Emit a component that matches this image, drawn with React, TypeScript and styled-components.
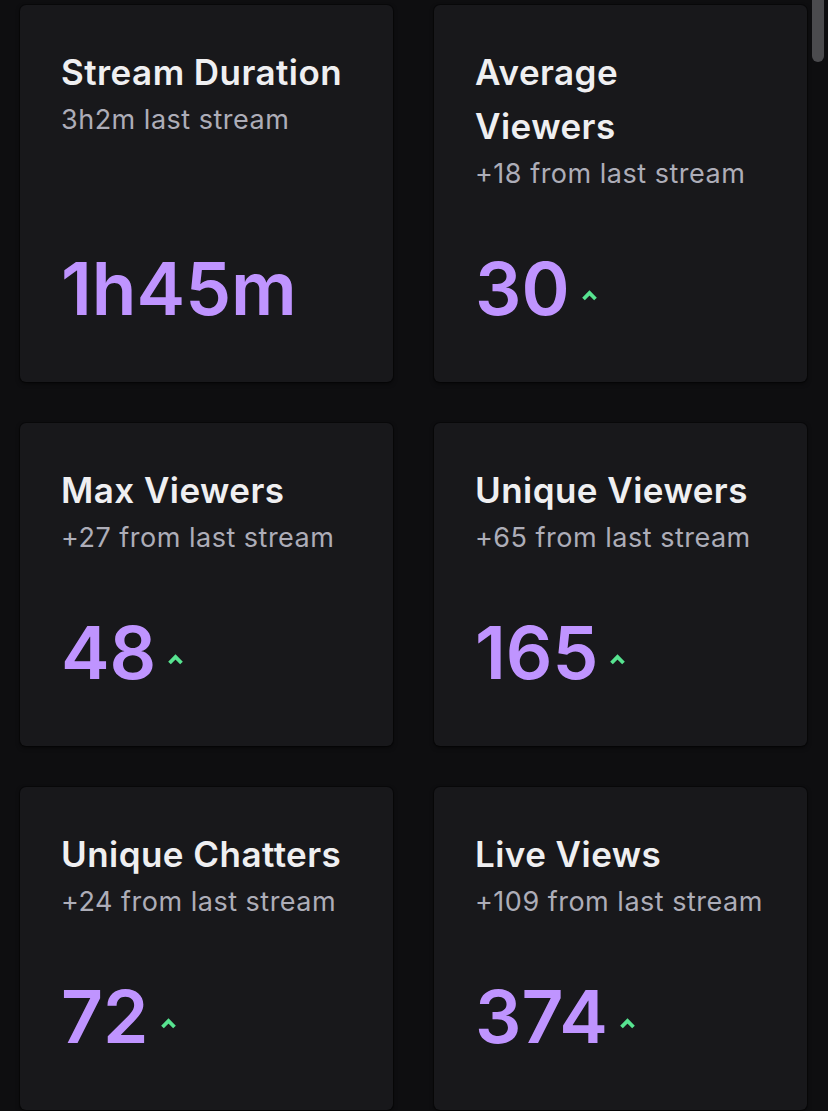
import * as React from 'react'
import styled, { createGlobalStyle } from 'styled-components'

const GlobalStyle = createGlobalStyle`
  html, body {
    margin: 0;
    padding: 0;
    background: #0e0e10;
    overflow: hidden;
  }
  body {
    font-family: Inter, "Noto Sans", "Liberation Sans", sans-serif;
    -webkit-font-smoothing: antialiased;
  }
`

const Page = styled.div`
  padding: 5px 21px 0 20px;
  height: 1111px;
  box-sizing: border-box;
`

const Grid = styled.div`
  display: grid;
  grid-template-columns: 1fr 1fr;
  column-gap: 41px;
  row-gap: 41px;
`

const Card = styled.div`
  display: flex;
  flex-direction: column;
  background: #18181b;
  border-radius: 6px;
  box-shadow: 0 0 0 1px rgba(0, 0, 0, 0.35), 0 2px 4px rgba(0, 0, 0, 0.5);
  padding: 40px 44px 39px 41px;
  min-width: 0;
`

const Title = styled.div`
  color: #efeff1;
  font-size: 35px;
  font-weight: 600;
  letter-spacing: 0.45px;
  line-height: 54px;
`

const Subtitle = styled.div`
  color: #adadb8;
  font-size: 27px;
  font-weight: 400;
  letter-spacing: 0.5px;
  line-height: 42px;
`

const ValueRow = styled.div`
  display: flex;
  align-items: center;
  gap: 11px;
  margin-top: auto;
  padding-top: 40px;
`

const Value = styled.span`
  color: #bf94ff;
  font-size: 73px;
  font-weight: 600;
  line-height: 108px;
`

const Trend = styled.svg`
  width: 17px;
  height: 12px;
  margin-top: 12px;
  flex: none;
`

const ScrollThumb = styled.div`
  position: fixed;
  top: 0;
  right: 4px;
  width: 12px;
  height: 62px;
  background: #4b4b4e;
  border-radius: 0 0 6px 6px;
`

interface IStat {
  title: string
  subtitle: string
  value: string
  up: boolean
}

const stats: IStat[] = [
  { title: 'Stream Duration', subtitle: '3h2m last stream', value: '1h45m', up: false },
  { title: 'Average Viewers', subtitle: '+18 from last stream', value: '30', up: true },
  { title: 'Max Viewers', subtitle: '+27 from last stream', value: '48', up: true },
  { title: 'Unique Viewers', subtitle: '+65 from last stream', value: '165', up: true },
  { title: 'Unique Chatters', subtitle: '+24 from last stream', value: '72', up: true },
  { title: 'Live Views', subtitle: '+109 from last stream', value: '374', up: true },
]

const UpChevron = () => (
  <Trend viewBox="0 0 17 12">
    <polyline
      points="2.5,10 8.5,4 14.5,10"
      fill="none"
      stroke="#57e390"
      strokeWidth="3.8"
    />
  </Trend>
)

export default function App() {
  return (
    <Page>
      <GlobalStyle />
      <Grid>
        { stats.map((s) => (
          <Card key={ s.title }>
            <Title>{ s.title }</Title>
            <Subtitle>{ s.subtitle }</Subtitle>
            <ValueRow>
              <Value>{ s.value }</Value>
              { s.up && <UpChevron /> }
            </ValueRow>
          </Card>
        )) }
      </Grid>
      <ScrollThumb />
    </Page>
  )
}
